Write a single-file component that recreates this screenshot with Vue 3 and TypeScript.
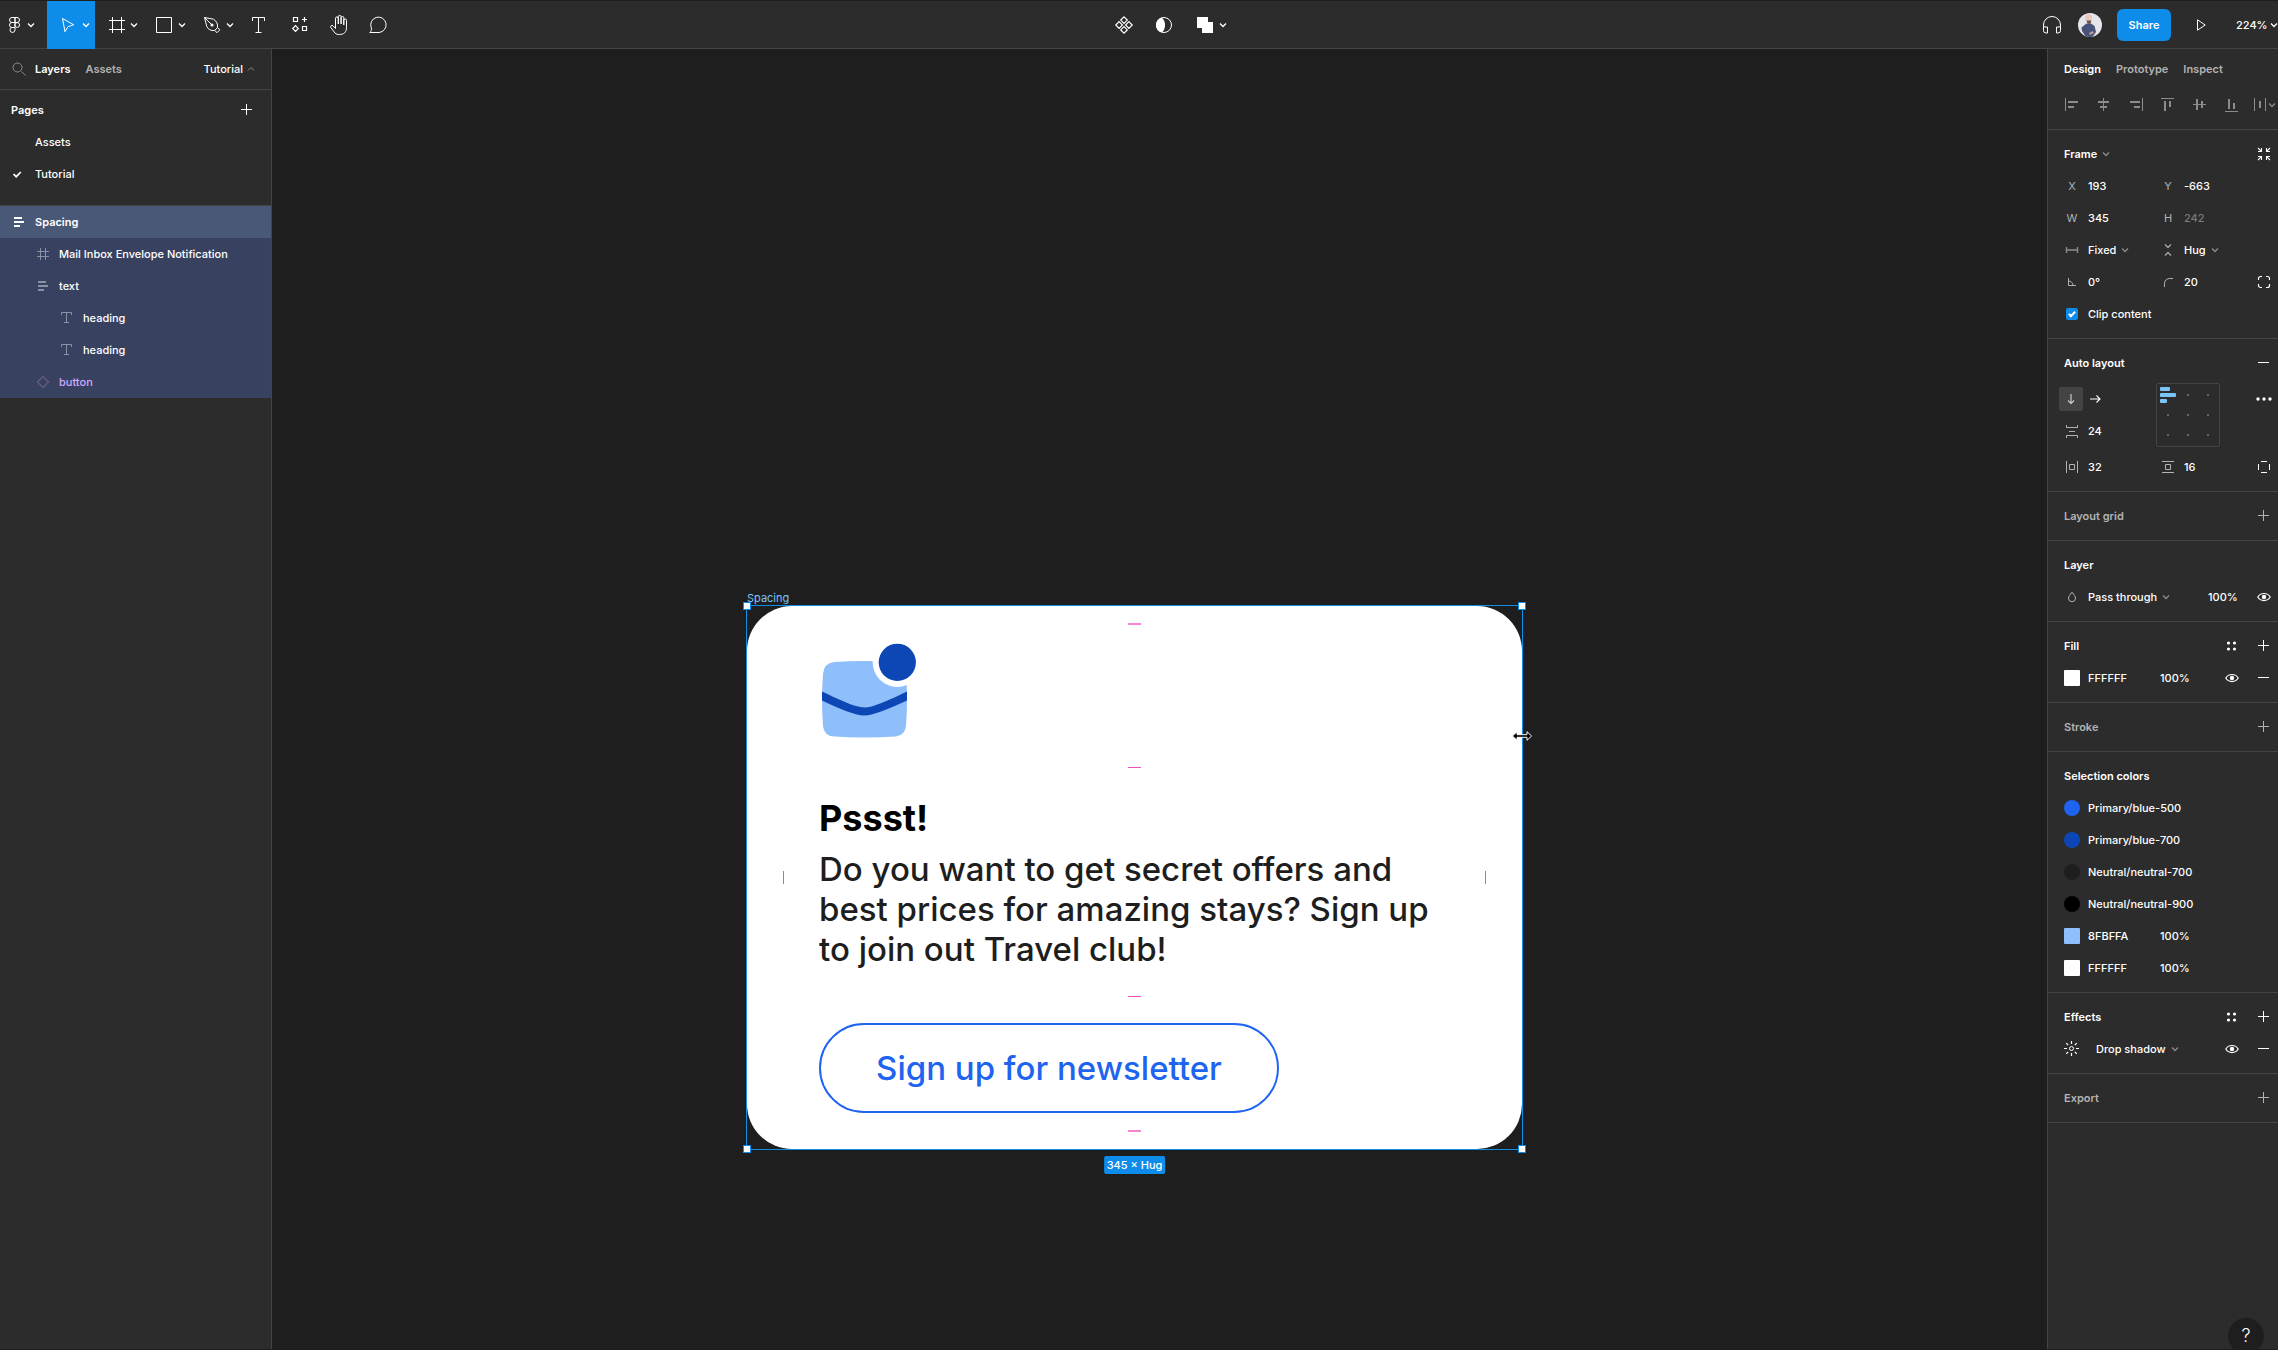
<script setup lang="ts">
import { h, ref } from 'vue'

interface Glyph {
  size: number
  body: string
}

const line = (d: string, extra = '') =>
  `<path d="${d}" fill="none" stroke="currentColor" ${extra}/>`
const solid = (d: string) => `<path d="${d}" fill="currentColor"/>`

const glyphs: Record<string, Glyph> = {
  // 24px toolbar icons
  logo: {
    size: 24,
    body: line('M12 4.5H9a2.5 2.5 0 0 0 0 5h3zM12 4.5h2a2.5 2.5 0 0 1 0 5h-2zM12 9.500H9a2.500 2.500 0 0 0 0 5h3zM12 14.500H9a2.500 2.500 0 1 0 3 2.500z')
      + '<circle cx="14.200" cy="12" r="2.400" fill="none" stroke="currentColor"/>',
  },
  move: { size: 24, body: line('M5.500 5.500 16.700 11.800 11 13.700 8 18.700z') },
  frame: { size: 24, body: line('M7.500 4v16M16.500 4v16M4 7.500h16M4 16.500h16') },
  rect: { size: 24, body: line('M3.500 4.500h15v15h-15z') },
  pen: {
    size: 24,
    body: line('M3.500 4.500 12.500 6.200C15.500 8 17 11 16.500 14.500L13.800 17.500C10 18 6.800 16.300 5.800 13.500zM3.500 4.500 10 11M16.500 14.500 18.800 16.800 16 19.700 13.800 17.500')
      + '<circle cx="11" cy="12" r="1.600" fill="currentColor"/>',
  },
  text: { size: 24, body: line('M5.500 8V4.500h12V8M11.500 4.500v15M8.500 19.500h6') },
  resources: {
    size: 24,
    body: line('M6.500 4.500h4v4h-4zM15.500 13.500h4v4h-4zM17.500 4v5M15 6.500h5M8.500 12.700l2.800 2.800-2.800 2.800-2.800-2.800z', 'stroke-width="1.200"'),
  },
  hand: {
    size: 24,
    body: line('M8.500 15.500 6 12.800C4.800 11.800 3 13 3.800 14.500L8 20c1 1.200 2.500 1.500 4.500 1.500 4.500 0 7-2.500 7-7V7.300a1.300 1.300 0 0 0-2.700 0V12M16.800 12V4.800a1.300 1.300 0 0 0-2.700 0V11M14.100 11V3.800a1.300 1.300 0 0 0-2.800 0V11M11.300 11V5.300a1.400 1.400 0 0 0-2.800 0v10.200'),
  },
  comment: { size: 24, body: line('M2.800 19.500C4.200 18.300 4.800 16.800 4.300 14.800A7.700 7.700 0 1 1 12 19.500z') },
  component: {
    size: 24,
    body: line('M12 3.800l3.300 3.300L12 10.400 8.700 7.100zM12 13.600l3.300 3.300-3.300 3.300-3.300-3.300zM7.100 8.700l3.300 3.300-3.300 3.300L3.800 12zM16.900 8.700l3.300 3.300-3.300 3.300-3.300-3.300z', 'stroke-width="1.200"'),
  },
  mask: {
    size: 24,
    body: '<circle cx="12" cy="12" r="7.500" fill="none" stroke="currentColor"/>'
      + solid('M9.500 4.400C14.200 7.500 14.200 16.500 9.500 19.600 2.200 17.500 2.200 6.500 9.500 4.400z'),
  },
  union: { size: 24, body: solid('M3 4h11v5h5v11H8v-5H3z') },
  headphones: {
    size: 24,
    body: line('M3.500 13.500V12a8.500 8.500 0 0 1 17 0v1.500M3.500 13.500v4a2.500 2.500 0 0 0 2.500 2.500h1.500v-6H5zM20.500 13.500v4a2.500 2.500 0 0 1-2.500 2.500h-1.500v-6H19z'),
  },
  play: { size: 24, body: line('M8.500 6.800v10.400L16.200 12z') },
  // 8px chevrons
  down: { size: 8, body: line('M1 2.500l3 3 3-3', 'stroke-width="1.300"') },
  up: { size: 8, body: line('M1 5.500l3-3 3 3') },
  // 16px panel icons
  search: { size: 16, body: line('M10.500 10.500l4 4') + '<circle cx="6.500" cy="6.500" r="4.500" fill="none" stroke="currentColor"/>' },
  plus: { size: 16, body: line('M7.500 2v11M2 7.500h11') },
  minus: { size: 16, body: line('M2 7.500h11') },
  check: { size: 16, body: line('M2.500 8l2.700 2.700L9.800 6', 'stroke-width="1.700"') },
  stack: { size: 16, body: solid('M3 3h8v2H3zM3 7h10v2H3zM3 11h6v2H3z') },
  hash: { size: 16, body: line('M5.500 2v12M10.500 2v12M2 5.500h12M2 10.500h12') },
  type: { size: 16, body: line('M2.500 5V2.500h10V5M7.500 2.500v10M5 12.500h5') },
  diamond: { size: 16, body: line('M8 2.500 13.500 8 8 13.500 2.500 8z', 'stroke-width="1.400"') },
  alignLeft: { size: 16, body: solid('M1 1h1v13H1zM4 4h10v2H4zM4 9h6v2H4z') },
  alignCenterH: { size: 16, body: solid('M7 1h1v13H7zM2 4h11v2H2zM4 9h7v2H4z') },
  alignRight: { size: 16, body: solid('M14 1h1v13h-1zM2 4h10v2H2zM6 9h6v2H6z') },
  alignTop: { size: 16, body: solid('M1 1h13v1H1zM4 4h2v10H4zM9 4h2v6H9z') },
  alignCenterV: { size: 16, body: solid('M1 7h13v1H1zM4 2h2v11H4zM9 4h2v7H9z') },
  alignBottom: { size: 16, body: solid('M1 14h13v1H1zM4 2h2v10H4zM9 6h2v6H9z') },
  distribute: { size: 16, body: solid('M2 1h1v13H2zM13 1h1v13h-1zM7 4h2v7H7z') },
  shrink: {
    size: 16,
    body: line('M2 2l3 3M5.500 2v3.500H2M14 2l-3 3M10.500 2v3.500H14M2 14l3-3M5.500 14v-3.500H2M14 14l-3-3M10.500 14v-3.500H14', 'stroke-width="1.100"'),
  },
  fixed: { size: 16, body: line('M2.500 5v6M13.500 5v6M2.500 8h11', 'stroke-width="1.400"') },
  hug: { size: 16, body: line('M5 2.500l3 3 3-3M5 13.500l3-3 3 3', 'stroke-width="1.200"') },
  angle: { size: 16, body: line('M4.500 4v7.500H12M4.500 7c2.500 0 4.500 2 4.500 4.500') },
  radius: { size: 16, body: line('M4.500 13V9.500a5 5 0 0 1 5-5H13') },
  corners: {
    size: 16,
    body: line('M2.500 6V4.500a2 2 0 0 1 2-2H6M10 2.500h1.500a2 2 0 0 1 2 2V6M13.500 10v1.500a2 2 0 0 1-2 2H10M6 13.500H4.500a2 2 0 0 1-2-2V10', 'stroke-width="1.200"'),
  },
  arrowDown: { size: 16, body: line('M8 3v9.500M5 9.500l3 3 3-3', 'stroke-width="1.200"') },
  arrowRight: { size: 16, body: line('M3 8h10M9.500 4.500 13 8l-3.500 3.500', 'stroke-width="1.100"') },
  gap: { size: 16, body: line('M2.500 2v2.500h11V2M2.500 15v-2.500h11V15M5 8.500h6') },
  padH: { size: 16, body: line('M2.500 2v12M13.500 2v12M5.500 5.500h5v5h-5z') },
  padV: { size: 16, body: line('M2 2.500h12M2 13.500h12M5.500 5.500h5v5h-5z') },
  sides: { size: 16, body: line('M5 2.500h6M5 13.500h6M2.500 5v6M13.500 5v6') },
  more: {
    size: 16,
    body: '<g fill="currentColor"><circle cx="2" cy="8" r="1.700"/><circle cx="8" cy="8" r="1.700"/><circle cx="14" cy="8" r="1.700"/></g>',
  },
  styles: {
    size: 16,
    body: '<g fill="currentColor"><circle cx="4.500" cy="5" r="1.600"/><circle cx="10.500" cy="5" r="1.600"/><circle cx="4.500" cy="11" r="1.600"/><circle cx="10.500" cy="11" r="1.600"/></g>',
  },
  drop: { size: 16, body: line('M8 3.200C6 5.800 4.500 7.500 4.500 9.200a3.500 3.500 0 0 0 7 0C11.500 7.500 10 5.800 8 3.200z') },
  eye: {
    size: 16,
    body: line('M1.800 8C4.500 3.300 11.500 3.300 14.200 8 11.500 12.700 4.500 12.700 1.800 8z', 'stroke-width="1.200"')
      + '<circle cx="8" cy="8" r="2.200" fill="currentColor"/>',
  },
  sun: {
    size: 16,
    body: line('M7.500 0v3M7.500 12v3M0 7.500h3M12 7.500h3M2.200 2.200l2 2M10.800 10.800l2 2M2.200 12.800l2-2M10.800 4.200l2-2', 'stroke-width="1.200"')
      + '<circle cx="7.500" cy="7.500" r="2" fill="none" stroke="currentColor"/>',
  },
}

const Icon = (props: { name: string }) => {
  const g = glyphs[props.name]
  return h('svg', {
    class: 'icon',
    width: g.size,
    height: g.size,
    viewBox: `0 0 ${g.size} ${g.size}`,
    'aria-hidden': 'true',
    innerHTML: g.body,
  })
}
Icon.props = ['name']

const tools = [
  { name: 'move', label: 'Move', menu: true, active: true },
  { name: 'frame', label: 'Frame', menu: true },
  { name: 'rect', label: 'Rectangle', menu: true },
  { name: 'pen', label: 'Pen', menu: true },
  { name: 'text', label: 'Text' },
  { name: 'resources', label: 'Resources' },
  { name: 'hand', label: 'Hand' },
  { name: 'comment', label: 'Comment' },
]

const pages = [
  { name: 'Assets', current: false },
  { name: 'Tutorial', current: true },
]

const layers = [
  { name: 'Spacing', icon: 'stack', level: 0, kind: 'selected' },
  { name: 'Mail Inbox Envelope Notification', icon: 'hash', level: 1, kind: 'child' },
  { name: 'text', icon: 'stack', level: 1, kind: 'child' },
  { name: 'heading', icon: 'type', level: 2, kind: 'child' },
  { name: 'heading', icon: 'type', level: 2, kind: 'child' },
  { name: 'button', icon: 'diamond', level: 1, kind: 'child instance' },
]

const aligns = ['alignLeft', 'alignCenterH', 'alignRight', 'alignTop', 'alignCenterV', 'alignBottom']

const x = ref('193')
const y = ref('-663')
const w = ref('345')
const hgt = ref('242')
const rotation = ref('0°')
const radius = ref('20')
const clip = ref(true)
const gap = ref('24')
const padX = ref('32')
const padY = ref('16')
const layerOpacity = ref('100%')
const fillHex = ref('FFFFFF')
const fillOpacity = ref('100%')

const colorStyles = [
  { name: 'Primary/blue-500', color: '#1e64f0' },
  { name: 'Primary/blue-700', color: '#0d47b5' },
  { name: 'Neutral/neutral-700', color: '#1e1e1e' },
  { name: 'Neutral/neutral-900', color: '#000000' },
]
const rawColors = ref([
  { hex: '8FBFFA', opacity: '100%' },
  { hex: 'FFFFFF', opacity: '100%' },
])
</script>

<template>
  <div class="app">
    <header class="toolbar">
      <div class="tools">
        <button class="tool logo" aria-label="Main menu"><Icon name="logo" /><Icon name="down" /></button>
        <button
          v-for="t in tools"
          :key="t.name"
          class="tool"
          :class="{ split: t.menu, active: t.active }"
          :aria-label="t.label"
        >
          <Icon :name="t.name" /><Icon v-if="t.menu" name="down" />
        </button>
      </div>
      <div class="tools middle">
        <button class="tool" aria-label="Create component"><Icon name="component" /></button>
        <button class="tool" aria-label="Use as mask"><Icon name="mask" /></button>
        <button class="tool split" aria-label="Union selection"><Icon name="union" /><Icon name="down" /></button>
      </div>
      <div class="tools end">
        <button class="tool" aria-label="Audio"><Icon name="headphones" /></button>
        <svg class="avatar" width="24" height="24" viewBox="0 0 24 24" aria-label="Account" role="img">
          <defs><clipPath id="face"><circle cx="12" cy="12" r="12" /></clipPath></defs>
          <g clip-path="url(#face)">
            <rect width="24" height="24" fill="#e6e6ea" />
            <path d="M3.500 14.500 8.500 10.500h4.500l3.500 2.500 1.500 6-3.500 5H8l-4-6z" fill="#46527a" />
            <path d="M11 20l3.500-2 1.500 2-4 2z" fill="#c09a90" />
            <circle cx="10.500" cy="5" r="3.700" fill="#e8cabd" />
            <path d="M8.500 7.500h4.800L12.800 10l-1.600 1.200L9.300 10z" fill="#6b544d" />
          </g>
        </svg>
        <button class="share">Share</button>
        <button class="tool" aria-label="Present"><Icon name="play" /></button>
        <button class="zoom">224%<Icon name="down" /></button>
      </div>
    </header>

    <div class="body">
      <aside class="left">
        <nav class="left-tabs">
          <button aria-label="Search"><Icon name="search" class="dim" /></button>
          <button class="tab on">Layers</button>
          <button class="tab assets">Assets</button>
          <button class="page-toggle">Tutorial<Icon name="up" class="dim" /></button>
        </nav>
        <section class="pages">
          <div class="pages-head">
            <h2>Pages</h2>
            <button aria-label="Add page"><Icon name="plus" /></button>
          </div>
          <ul>
            <li v-for="p in pages" :key="p.name">
              <button class="page">
                <span class="slot"><Icon v-if="p.current" name="check" /></span>{{ p.name }}
              </button>
            </li>
          </ul>
        </section>
        <ul class="layers">
          <li v-for="(l, i) in layers" :key="i">
            <button class="layer" :class="[l.kind, 'level-' + l.level]"><Icon :name="l.icon" />{{ l.name }}</button>
          </li>
        </ul>
      </aside>

      <main class="canvas">
        <div class="artboard">
          <span class="frame-name">Spacing</span>
          <article class="card">
            <svg class="mail" width="98" height="98" viewBox="0 0 98 98" aria-hidden="true">
              <path
                d="M15 20Q45 18 76 20Q87 21 87 32Q89 57 87 84Q86 93 77 94.500Q45 96.500 15 94.500Q5 94 4 84Q2 57 4 32Q5 21 15 20z"
                fill="#8fbffa"
              />
              <path
                d="M3 49.500C19 57 36 65.500 45.300 65.500S71 57.500 88 49.500V58.500C70 66.500 55 73.500 45.300 73.500S20 66.500 3 58.500z"
                fill="#0d47b5"
              />
              <circle cx="78.300" cy="20.300" r="24.600" fill="#fff" />
              <circle cx="78.300" cy="20.300" r="18.600" fill="#0d47b5" />
            </svg>
            <div class="copy">
              <h1>Pssst!</h1>
              <p>Do you want to get secret offers and<br />best prices for amazing stays? Sign up<br />to join out Travel club!</p>
            </div>
            <button class="signup">Sign up for newsletter</button>
          </article>
          <i class="mark h edge top" /><i class="mark h upper" /><i class="mark h lower" /><i class="mark h edge bottom" />
          <i class="mark v start" /><i class="mark v finish" />
          <i class="handle tl" /><i class="handle tr" /><i class="handle bl" /><i class="handle br" />
          <span class="size">345 × Hug</span>
          <svg class="cursor" width="22" height="12" viewBox="0 0 22 12" aria-hidden="true">
            <path
              d="M1.500 6 6 1.700v3h10v-3L20.500 6 16 10.300v-3H6v3z"
              fill="#000" stroke="#fff" stroke-width="1"
            />
          </svg>
        </div>
      </main>

      <aside class="right">
        <nav class="right-tabs">
          <button class="tab on">Design</button>
          <button class="tab">Prototype</button>
          <button class="tab">Inspect</button>
        </nav>
        <div class="aligns">
          <button v-for="a in aligns" :key="a" :aria-label="a"><Icon :name="a" /></button>
          <button class="spread" aria-label="distribute"><Icon name="distribute" /><Icon name="down" /></button>
        </div>

        <section>
          <div class="row">
            <label class="pick strong">
              <select aria-label="Frame type"><option>Frame</option><option>Group</option></select><Icon name="down" class="dim" />
            </label>
            <button class="push" aria-label="Resize to fit"><Icon name="shrink" /></button>
          </div>
          <div class="row cols">
            <label class="field"><span>X</span><input v-model="x" /></label>
            <label class="field"><span>Y</span><input v-model="y" /></label>
          </div>
          <div class="row cols">
            <label class="field"><span>W</span><input v-model="w" /></label>
            <label class="field"><span>H</span><input v-model="hgt" class="muted" /></label>
          </div>
          <div class="row cols">
            <label class="field pick">
              <Icon name="fixed" class="dim" />
              <select aria-label="Horizontal resizing"><option>Fixed</option><option>Hug</option></select><Icon name="down" class="dim" />
            </label>
            <label class="field pick">
              <Icon name="hug" class="soft" />
              <select aria-label="Vertical resizing"><option>Hug</option><option>Fixed</option></select><Icon name="down" class="dim" />
            </label>
          </div>
          <div class="row cols">
            <label class="field"><Icon name="angle" class="soft" /><input v-model="rotation" aria-label="Rotation" /></label>
            <label class="field"><Icon name="radius" class="soft" /><input v-model="radius" aria-label="Corner radius" /></label>
            <button class="push" aria-label="Independent corners"><Icon name="corners" /></button>
          </div>
          <div class="row">
            <label class="tick"><input v-model="clip" type="checkbox" />Clip content</label>
          </div>
        </section>

        <section>
          <div class="row">
            <h2>Auto layout</h2>
            <button class="push" aria-label="Remove auto layout"><Icon name="minus" /></button>
          </div>
          <div class="flowbox">
            <div>
              <div class="row directions">
                <button class="dir on" aria-label="Vertical"><Icon name="arrowDown" /></button>
                <button class="dir" aria-label="Horizontal"><Icon name="arrowRight" /></button>
              </div>
              <div class="row">
                <label class="field"><Icon name="gap" class="soft" /><input v-model="gap" aria-label="Gap" /></label>
              </div>
            </div>
            <button class="matrix" aria-label="Alignment">
              <svg width="62" height="62" viewBox="1 1 62 62" aria-hidden="true">
                <g fill="#666">
                  <rect v-for="n in 8" :key="n" :x="11 + (n % 3) * 20" :y="11 + Math.floor(n / 3) * 20" width="2" height="2" />
                </g>
                <g fill="#7bc4fa">
                  <rect x="4" y="4" width="10" height="4" rx="1" />
                  <rect x="4" y="10" width="16" height="4" rx="1" />
                  <rect x="4" y="16" width="7" height="4" rx="1" />
                </g>
              </svg>
            </button>
            <div class="row"><button class="push" aria-label="Advanced layout"><Icon name="more" /></button></div>
          </div>
          <div class="row cols">
            <label class="field"><Icon name="padH" class="soft" /><input v-model="padX" aria-label="Horizontal padding" /></label>
            <label class="field"><Icon name="padV" class="soft" /><input v-model="padY" aria-label="Vertical padding" /></label>
            <button class="push" aria-label="Individual padding"><Icon name="sides" /></button>
          </div>
        </section>

        <section>
          <div class="row empty"><h2>Layout grid</h2><button class="push" aria-label="Add grid"><Icon name="plus" /></button></div>
        </section>

        <section>
          <div class="row"><h2>Layer</h2></div>
          <div class="row">
            <label class="field pick">
              <Icon name="drop" class="soft" />
              <select aria-label="Blend mode"><option>Pass through</option><option>Normal</option></select><Icon name="down" class="dim" />
            </label>
            <input v-model="layerOpacity" class="percent push" aria-label="Layer opacity" />
            <button class="after-percent" aria-label="Toggle layer"><Icon name="eye" /></button>
          </div>
        </section>

        <section>
          <div class="row">
            <h2>Fill</h2>
            <span class="pair push">
              <button aria-label="Fill styles"><Icon name="styles" /></button>
              <button aria-label="Add fill"><Icon name="plus" /></button>
            </span>
          </div>
          <div class="row">
            <label class="field"><span class="swatch" :style="{ background: '#' + fillHex }" /><input v-model="fillHex" aria-label="Fill colour" /></label>
            <input v-model="fillOpacity" class="percent" aria-label="Fill opacity" />
            <span class="pair push">
              <button aria-label="Toggle fill"><Icon name="eye" /></button>
              <button aria-label="Remove fill"><Icon name="minus" /></button>
            </span>
          </div>
        </section>

        <section>
          <div class="row empty"><h2>Stroke</h2><button class="push" aria-label="Add stroke"><Icon name="plus" /></button></div>
        </section>

        <section>
          <div class="row"><h2>Selection colors</h2></div>
          <div v-for="c in colorStyles" :key="c.name" class="row">
            <button class="field"><span class="swatch round" :style="{ background: c.color }" />{{ c.name }}</button>
          </div>
          <div v-for="c in rawColors" :key="c.hex" class="row">
            <label class="field"><span class="swatch" :style="{ background: '#' + c.hex }" /><input v-model="c.hex" aria-label="Colour" /></label>
            <input v-model="c.opacity" class="percent" aria-label="Opacity" />
          </div>
        </section>

        <section>
          <div class="row">
            <h2>Effects</h2>
            <span class="pair push">
              <button aria-label="Effect styles"><Icon name="styles" /></button>
              <button aria-label="Add effect"><Icon name="plus" /></button>
            </span>
          </div>
          <div class="row">
            <label class="field pick effect">
              <Icon name="sun" />
              <select aria-label="Effect"><option>Drop shadow</option><option>Layer blur</option></select><Icon name="down" class="dim" />
            </label>
            <span class="pair push">
              <button aria-label="Toggle effect"><Icon name="eye" /></button>
              <button aria-label="Remove effect"><Icon name="minus" /></button>
            </span>
          </div>
        </section>

        <section>
          <div class="row empty"><h2>Export</h2><button class="push" aria-label="Add export"><Icon name="plus" /></button></div>
        </section>

        <button class="help" aria-label="Help">?</button>
      </aside>
    </div>
  </div>
</template>

<style>
body {
  margin: 0;
  background: #1e1e1e;
}
</style>

<style scoped>
.app {
  box-sizing: border-box;
  display: flex;
  flex-direction: column;
  height: 100vh;
  border-top: 1px solid #1e1e1e;
  border-bottom: 1px solid #1e1e1e;
  overflow: hidden;
  color: #fff;
  background: #1e1e1e;
  font: 500 11px/16px Inter, "Liberation Sans", sans-serif;
}
button,
input,
select {
  margin: 0;
  padding: 0;
  border: 0;
  border-radius: 0;
  background: none;
  color: inherit;
  font: inherit;
  outline: 0;
}
button {
  display: flex;
  align-items: center;
  flex: none;
}
select {
  appearance: none;
  field-sizing: content;
}
ul {
  margin: 0;
  padding: 0;
  list-style: none;
}
h2 {
  margin: 0;
  font: inherit;
  font-weight: 600;
}
.icon {
  display: block;
  flex: none;
}
.dim {
  color: #8c8c8c;
}
.soft {
  color: #b3b3b3;
}

/* Toolbar */
.toolbar {
  display: grid;
  grid-template-columns: 1fr auto 1fr;
  flex: none;
  height: 47px;
  border-bottom: 1px solid #444;
  background: #2c2c2c;
}
.tools {
  display: flex;
}
.middle {
  padding-left: 58px;
}
.end {
  justify-content: flex-end;
  align-items: center;
}
.tool {
  justify-content: center;
  width: 40px;
  height: 48px;
}
.split {
  justify-content: flex-start;
  gap: 1px;
  width: 48px;
  padding-left: 10px;
}
.logo {
  justify-content: flex-start;
  width: 47px;
  padding-left: 3px;
}
.active {
  background: #0d8ce9;
}
.avatar {
  margin-left: 6px;
}
.share {
  justify-content: center;
  width: 54px;
  height: 32px;
  margin: 0 10px 0 15px;
  border-radius: 6px;
  background: #0d8ce9;
  font-weight: 600;
}
.zoom {
  justify-content: space-between;
  width: 42px;
  margin-left: 15px;
}

/* Columns */
.body {
  display: flex;
  flex: 1;
  min-height: 0;
}
.left {
  flex: none;
  width: 271px;
  border-right: 1px solid #444;
  background: #2c2c2c;
}
.right {
  position: relative;
  flex: none;
  width: 230px;
  border-left: 1px solid #444;
  background: #2c2c2c;
  overflow: hidden;
}
.canvas {
  position: relative;
  flex: 1;
  min-width: 0;
  overflow: hidden;
}

/* Left panel */
.left-tabs {
  display: flex;
  align-items: center;
  height: 40px;
  padding: 0 16px 0 11px;
  border-bottom: 1px solid #444;
}
.tab {
  color: #b3b3b3;
  font-weight: 600;
}
.tab.on {
  color: #fff;
}
.left-tabs .on {
  margin-left: 8px;
}
.assets {
  margin-left: 15px;
}
.page-toggle {
  gap: 4px;
  margin-left: auto;
}
.pages {
  padding: 4px 0 15px;
  border-bottom: 1px solid #444;
}
.pages-head {
  display: flex;
  align-items: center;
  justify-content: space-between;
  height: 32px;
  padding: 0 16px 0 11px;
}
.page,
.layer {
  gap: 8px;
  width: 100%;
  height: 32px;
  padding-left: 11px;
}
.slot {
  width: 16px;
}
.selected {
  background: #4a5878;
  font-weight: 600;
}
.child {
  background: #394160;
}
.child .icon {
  color: #8a91a5;
}
.level-1 {
  padding-left: 35px;
}
.level-2 {
  padding-left: 59px;
}
.instance {
  color: #d1a8ff;
}
.instance .icon {
  color: #605b80;
}

/* Canvas */
.artboard {
  position: absolute;
  top: 557px;
  left: 475px;
  width: 775px;
  outline: 1px solid #0d8ce9;
}
.card {
  display: flex;
  flex-direction: column;
  align-items: flex-start;
  gap: 54px;
  padding: 36px 72px;
  border-radius: 45px;
  background: #fff;
  color: #1e1e1e;
}
.mail {
  display: block;
}
.copy h1 {
  margin: 0 0 7px;
  color: #000;
  font-size: 36px;
  font-weight: 700;
  line-height: 48px;
}
.copy p {
  margin: 0;
  font-size: 33px;
  font-weight: 500;
  line-height: 40px;
  white-space: nowrap;
}
.signup {
  justify-content: center;
  width: 460px;
  height: 90px;
  border: 2px solid #1e64f0;
  border-radius: 45px;
  color: #1e64f0;
  font-size: 33px;
  font-weight: 500;
}
.frame-name {
  position: absolute;
  bottom: 100%;
  left: 0;
  color: #7bc4fa;
  font-weight: 400;
}
.mark {
  position: absolute;
  background: #f24fbc;
}
.mark.h {
  left: 381px;
  width: 13px;
  height: 1px;
}
.mark.edge {
  height: 2px;
  background: #f786cf;
}
.mark.v {
  top: 265px;
  width: 1px;
  height: 13px;
}
.top {
  top: 17px;
}
.upper {
  top: 161px;
}
.lower {
  bottom: 152px;
}
.bottom {
  bottom: 17px;
}
.start {
  left: 36px;
}
.finish {
  right: 36px;
}
.handle {
  position: absolute;
  width: 6px;
  height: 6px;
  border: 1px solid #0d8ce9;
  background: #fff;
}
.tl,
.tr {
  top: -4px;
}
.bl,
.br {
  bottom: -4px;
}
.tl,
.bl {
  left: -4px;
}
.tr,
.br {
  right: -4px;
}
.size {
  position: absolute;
  top: calc(100% + 7px);
  left: 50%;
  transform: translateX(-50%);
  padding: 1px 3px;
  border-radius: 2px;
  background: #0d8ce9;
  white-space: nowrap;
}
.cursor {
  position: absolute;
  top: 124px;
  right: -11px;
}

/* Right panel */
.right-tabs {
  display: flex;
  align-items: center;
  gap: 15px;
  height: 40px;
  padding-left: 16px;
}
.aligns {
  display: flex;
  align-items: center;
  gap: 16px;
  height: 32px;
  padding: 0 0 8px 16px;
  border-bottom: 1px solid #444;
  color: #8c8c8c;
}
.spread {
  margin-left: -4px;
}
section {
  padding: 8px 6px 8px 16px;
  border-bottom: 1px solid #444;
}
.pages {
  padding: 4px 0 15px;
}
.row {
  display: flex;
  align-items: center;
  height: 32px;
}
.cols .field {
  width: 96px;
}
.push {
  margin-left: auto;
}
.field {
  display: flex;
  align-items: center;
  gap: 8px;
}
.field > span {
  flex: none;
  width: 16px;
  text-align: center;
  color: #b3b3b3;
  font-weight: 400;
}
.field input {
  width: 64px;
}
.field .muted {
  color: #7a7a7a;
}
.pick {
  display: flex;
  align-items: center;
}
.pick select + .icon {
  margin-left: 5px;
}
.field.pick {
  gap: 0;
}
.field select {
  margin-left: 8px;
}
.field.effect select {
  margin-left: 16px;
}
.strong {
  font-weight: 600;
}
.tick {
  display: flex;
  align-items: center;
  gap: 10px;
  padding-left: 2px;
}
.tick input {
  position: relative;
  width: 12px;
  height: 12px;
  border-radius: 2px;
  background: #0d8ce9;
  appearance: none;
}
.tick input:checked::after {
  content: "";
  position: absolute;
  top: 2px;
  left: 4px;
  width: 2px;
  height: 5px;
  border: solid #fff;
  border-width: 0 2px 2px 0;
  transform: rotate(45deg);
}
.flowbox {
  display: grid;
  grid-template-columns: 92px 64px 1fr;
  margin: 4px 0;
}
.directions {
  margin-left: -5px;
}
.dir {
  justify-content: center;
  width: 24px;
  height: 24px;
}
.dir.on {
  border-radius: 2px;
  background: #444;
  color: #ccc;
}
.matrix {
  box-sizing: border-box;
  width: 64px;
  height: 64px;
  border: 1px solid #444;
  border-radius: 2px;
}
.empty {
  color: #b3b3b3;
}
.percent {
  width: 32px;
}
.field + .percent:not(.push) {
  margin-left: 8px;
}
.after-percent {
  margin-left: 16px;
}
.pair {
  display: flex;
  gap: 16px;
}
.swatch {
  height: 16px;
  border-radius: 1px;
}
.round {
  border-radius: 50%;
}
.help {
  position: absolute;
  right: 14px;
  bottom: -5px;
  justify-content: center;
  width: 36px;
  height: 36px;
  border-radius: 50%;
  background: #1e1e1e;
  font-size: 18px;
  font-weight: 300;
}
</style>
